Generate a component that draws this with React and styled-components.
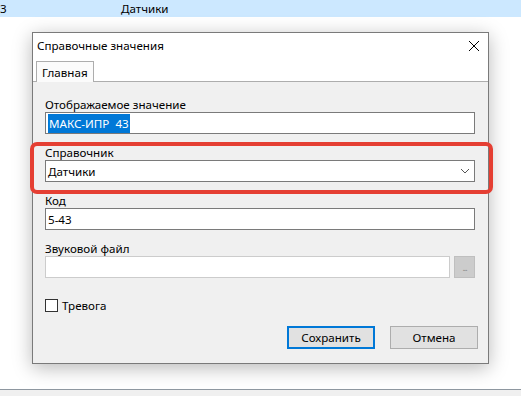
import React from "react";
import styled, { createGlobalStyle } from "styled-components";

const Global = createGlobalStyle`
  html, body { margin: 0; padding: 0; background: #ffffff; }
  body { font-family: "Noto Sans", "Open Sans", sans-serif; font-size: 11.6px; color: #000; }
`;

const Screen = styled.div`
  width: 521px;
  height: 396px;
  display: flex;
  flex-direction: column;
  overflow: hidden;
  background: #fff;
`;

const ListRow = styled.div`
  height: 17px;
  background: #cce8ff;
  display: flex;
  align-items: center;
  line-height: 17px;
`;

const Cell = styled.span`
  width: ${(p) => p.$w || "auto"};
  box-sizing: border-box;
`;

const Stage = styled.div`
  flex: 1;
  padding: 15px 0 0 32px;
`;

const Dialog = styled.div`
  position: relative;
  width: 457px;
  height: 332px;
  box-sizing: border-box;
  border: 1px solid #7a7a7a;
  background: #f0f0f0;
  box-shadow: 0 4px 18px rgba(0, 0, 0, 0.28);
  display: flex;
  flex-direction: column;
`;

const TitleBar = styled.div`
  height: 26px;
  background: #fff;
  display: flex;
  align-items: center;
  justify-content: space-between;
  padding: 0 8px 1px 4px;
  box-sizing: border-box;
`;

const Close = styled.span`
  width: 12px;
  height: 12px;
  display: flex;
`;

const TabStrip = styled.div`
  height: 22px;
  background: #fff;
  display: flex;
  align-items: flex-end;
  padding-left: 3px;
  border-bottom: 1px solid #adadad;
`;

const Tab = styled.div`
  height: 21px;
  box-sizing: border-box;
  border: 1px solid #adadad;
  border-bottom: none;
  background: #fbfbfb;
  padding: 0 5px;
  display: flex;
  align-items: center;
  margin-bottom: -1px;
`;

const Page = styled.div`
  flex: 1;
  padding: 15px 13px 0 12px;
  display: flex;
  flex-direction: column;
`;

const Field = styled.div`
  display: flex;
  flex-direction: column;
  margin-bottom: 11px;
`;

const Label = styled.div`
  height: 15px;
  line-height: 15px;
  white-space: nowrap;
`;

const Input = styled.div`
  height: 22px;
  flex: none;
  box-sizing: border-box;
  border: 1px solid ${(p) => (p.$disabled ? "#cccccc" : "#7a7a7a")};
  background: #fff;
  display: flex;
  align-items: center;
  padding-left: 2px;
  justify-content: space-between;
`;

const FileInput = styled(Input)`
  flex: 1;
`;

const Selected = styled.span`
  background: #0078d7;
  color: #fff;
  padding: 1px 1px;
  line-height: 17px;
`;

const Chevron = styled.svg`
  margin-right: 4px;
`;

const Row = styled.div`
  display: flex;
  gap: 4px;
`;

const Browse = styled.div`
  width: 21px;
  height: 22px;
  box-sizing: border-box;
  background: #cccccc;
  border: 1px solid #bfbfbf;
  color: #8a8a8a;
  font-size: 9px;
  display: flex;
  align-items: center;
  justify-content: center;
  letter-spacing: -1px;
`;

const Check = styled.label`
  display: flex;
  align-items: center;
  gap: 4px;
  margin-top: 9px;
`;

const Box = styled.span`
  width: 13px;
  height: 13px;
  box-sizing: border-box;
  border: 1px solid #333;
  background: #fff;
`;

const Buttons = styled.div`
  display: flex;
  justify-content: flex-end;
  gap: 15px;
  margin-top: 13px;
  margin-right: -3px;
`;

const Button = styled.div`
  width: 88px;
  height: 23px;
  box-sizing: border-box;
  background: #e1e1e1;
  border: ${(p) => (p.$primary ? "2px solid #0078d7" : "1px solid #adadad")};
  display: flex;
  align-items: center;
  justify-content: center;
`;

const Highlight = styled.div`
  position: absolute;
  left: -3px;
  top: 109px;
  width: 463px;
  height: 52px;
  box-sizing: border-box;
  border: 4px solid #e53f33;
  border-radius: 7px;
  pointer-events: none;
`;

const Footer = styled.div`
  height: 6px;
  border-top: 1px solid #8e97a0;
  background: #f0f0f0;
`;

export default function App() {
  return (
    <Screen>
      <Global />
      <ListRow>
        <Cell $w="121px">3</Cell>
        <Cell>Датчики</Cell>
      </ListRow>
      <Stage>
        <Dialog>
          <TitleBar>
            <span>Справочные значения</span>
            <Close>
              <svg width="12" height="12" viewBox="0 0 12 12">
                <path d="M1 1 L11 11 M11 1 L1 11" stroke="#000" strokeWidth="1" />
              </svg>
            </Close>
          </TitleBar>
          <TabStrip>
            <Tab>Главная</Tab>
          </TabStrip>
          <Page>
            <Field>
              <Label>Отображаемое значение</Label>
              <Input>
                <Selected>МАКС-ИПР&nbsp;&nbsp;43</Selected>
              </Input>
            </Field>
            <Field>
              <Label>Справочник</Label>
              <Input>
                <span>Датчики</span>
                <Chevron width="10" height="6" viewBox="0 0 10 6">
                  <path d="M1 1 L5 5 L9 1" stroke="#555" strokeWidth="1" fill="none" />
                </Chevron>
              </Input>
            </Field>
            <Field>
              <Label>Код</Label>
              <Input>5-43</Input>
            </Field>
            <Field>
              <Label>Звуковой файл</Label>
              <Row>
                <FileInput $disabled />
                <Browse>...</Browse>
              </Row>
            </Field>
            <Check>
              <Box />
              <span>Тревога</span>
            </Check>
            <Buttons>
              <Button $primary>Сохранить</Button>
              <Button>Отмена</Button>
            </Buttons>
          </Page>
          <Highlight />
        </Dialog>
      </Stage>
      <Footer />
    </Screen>
  );
}
